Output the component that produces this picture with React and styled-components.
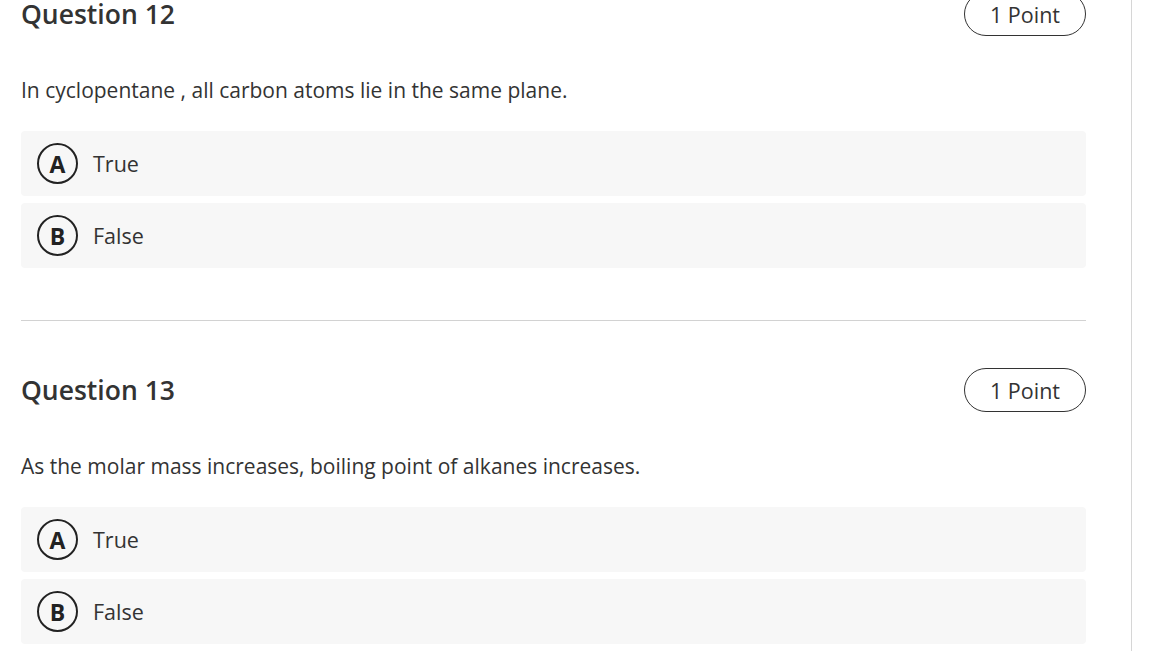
import React from "react";
import styled, { createGlobalStyle } from "styled-components";

const GlobalStyle = createGlobalStyle`
  html, body {
    margin: 0;
    padding: 0;
    background: #ffffff;
    overflow: hidden;
  }
  body {
    font-family: "Open Sans", "Noto Sans", "Liberation Sans", sans-serif;
    color: #333333;
  }
`;

const Page = styled.div`
  display: flex;
  height: 100vh;
`;

const Main = styled.main`
  width: 1132px;
  box-sizing: border-box;
  padding: 0 45px 0 21px;
  border-right: 1px solid #d6d6d6;
  overflow: hidden;
`;

// page is scrolled a little, the first header is cut at the top
const QuestionList = styled.div`
  margin-top: -8px;
`;

const Question = styled.section`
  padding-bottom: 52px;
  & + & {
    padding-top: 47px;
    border-top: 1px solid #d2d2d2;
  }
`;

const Header = styled.div`
  display: flex;
  align-items: center;
  justify-content: space-between;
  height: 44px;
`;

const Title = styled.h2`
  margin: 0;
  font-size: 26.5px;
  line-height: 30px;
  font-weight: 600;
  color: #333333;
`;

const Points = styled.span`
  display: inline-flex;
  align-items: center;
  justify-content: center;
  width: 122px;
  height: 44px;
  box-sizing: border-box;
  border: 1.5px solid #333333;
  border-radius: 22px;
  font-size: 21.5px;
  color: #333333;
`;

const Prompt = styled.p`
  margin: 40px 0 27px;
  font-size: 21px;
  line-height: 28px;
  color: #333333;
`;

const Options = styled.div`
  display: flex;
  flex-direction: column;
  gap: 7px;
`;

const Option = styled.label`
  display: flex;
  align-items: center;
  gap: 15px;
  height: 65px;
  box-sizing: border-box;
  padding-left: 16px;
  background: #f7f7f7;
  border-radius: 4px;
  font-size: 21.5px;
  color: #333333;
`;

const Letter = styled.span`
  display: inline-flex;
  align-items: center;
  justify-content: center;
  width: 41px;
  height: 41px;
  box-sizing: border-box;
  border: 2.5px solid #222222;
  border-radius: 50%;
  font-size: 23px;
  font-weight: 700;
  color: #222222;
`;

const questions = [
  {
    n: 12,
    text: "In cyclopentane , all carbon atoms lie in the same plane.",
  },
  {
    n: 13,
    text: "As the molar mass increases, boiling point of alkanes increases.",
  },
];

const choices = [
  { key: "A", label: "True" },
  { key: "B", label: "False" },
];

export default function App() {
  return (
    <>
      <GlobalStyle />
      <Page>
        <Main>
          <QuestionList>
            {questions.map((q) => (
              <Question key={q.n}>
                <Header>
                  <Title>Question {q.n}</Title>
                  <Points>1 Point</Points>
                </Header>
                <Prompt>{q.text}</Prompt>
                <Options>
                  {choices.map((c) => (
                    <Option key={c.key}>
                      <Letter>{c.key}</Letter>
                      {c.label}
                    </Option>
                  ))}
                </Options>
              </Question>
            ))}
          </QuestionList>
        </Main>
      </Page>
    </>
  );
}
